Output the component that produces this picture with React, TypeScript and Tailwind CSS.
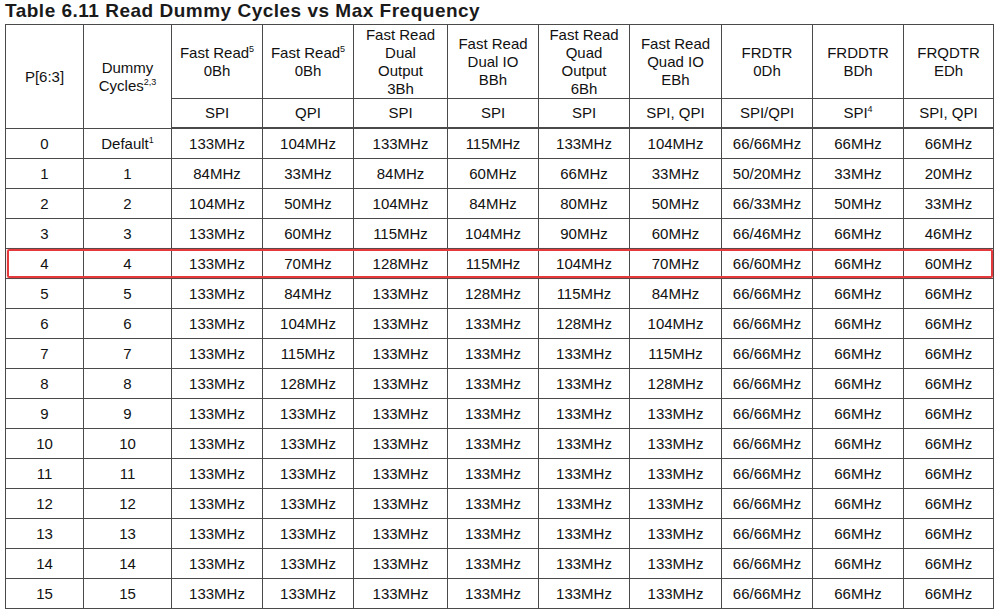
const cols = [78, 88, 91, 91, 94, 91, 91, 92, 91, 91, 90];

type Head = { name: string[]; sup?: string; mode: string; modeSup?: string };

const heads: Head[] = [
  { name: ['Fast Read', '0Bh'], sup: '5', mode: 'SPI' },
  { name: ['Fast Read', '0Bh'], sup: '5', mode: 'QPI' },
  { name: ['Fast Read', 'Dual', 'Output', '3Bh'], mode: 'SPI' },
  { name: ['Fast Read', 'Dual IO', 'BBh'], mode: 'SPI' },
  { name: ['Fast Read', 'Quad', 'Output', '6Bh'], mode: 'SPI' },
  { name: ['Fast Read', 'Quad IO', 'EBh'], mode: 'SPI, QPI' },
  { name: ['FRDTR', '0Dh'], mode: 'SPI/QPI' },
  { name: ['FRDDTR', 'BDh'], mode: 'SPI', modeSup: '4' },
  { name: ['FRQDTR', 'EDh'], mode: 'SPI, QPI' },
];

const rows: string[][] = [
  ['0', 'Default', '133', '104', '133', '115', '133', '104', '66/66', '66', '66'],
  ['1', '1', '84', '33', '84', '60', '66', '33', '50/20', '33', '20'],
  ['2', '2', '104', '50', '104', '84', '80', '50', '66/33', '50', '33'],
  ['3', '3', '133', '60', '115', '104', '90', '60', '66/46', '66', '46'],
  ['4', '4', '133', '70', '128', '115', '104', '70', '66/60', '66', '60'],
  ['5', '5', '133', '84', '133', '128', '115', '84', '66/66', '66', '66'],
  ['6', '6', '133', '104', '133', '133', '128', '104', '66/66', '66', '66'],
  ['7', '7', '133', '115', '133', '133', '133', '115', '66/66', '66', '66'],
  ['8', '8', '133', '128', '133', '133', '133', '128', '66/66', '66', '66'],
  ['9', '9', '133', '133', '133', '133', '133', '133', '66/66', '66', '66'],
  ['10', '10', '133', '133', '133', '133', '133', '133', '66/66', '66', '66'],
  ['11', '11', '133', '133', '133', '133', '133', '133', '66/66', '66', '66'],
  ['12', '12', '133', '133', '133', '133', '133', '133', '66/66', '66', '66'],
  ['13', '13', '133', '133', '133', '133', '133', '133', '66/66', '66', '66'],
  ['14', '14', '133', '133', '133', '133', '133', '133', '66/66', '66', '66'],
  ['15', '15', '133', '133', '133', '133', '133', '133', '66/66', '66', '66'],
];

const cell = 'flex items-center justify-center text-center border-r border-b border-[#4a4a4a]';
const supCls = 'text-[9px] relative -top-[6px] align-baseline';

export default function App() {
  return (
    <div
      className="w-[999px] h-[612px] bg-white text-[#111] overflow-hidden"
      style={{ fontFamily: '"Liberation Sans", Arial, sans-serif' }}
    >
      <div className="h-[24px] pl-[5px] text-[19px] leading-[22px] tracking-[0.5px] font-bold text-[#1a1a1a]">
        Table 6.11 Read Dummy Cycles vs Max Frequency
      </div>

      <div className="relative ml-[5px] w-[989px]">
        <div
          className="grid border-l border-t border-[#4a4a4a] text-[15px] leading-[18px]"
          style={{
            gridTemplateColumns: cols.map((c) => `${c}px`).join(' '),
            gridTemplateRows: `74px 30px repeat(16, 30px)`,
          }}
        >
          {/* Header */}
          <div className={`${cell} row-span-2`}>P[6:3]</div>
          <div className={`${cell} row-span-2 flex-col`}>
            <span>Dummy</span>
            <span>
              Cycles<sup className={supCls}>2,3</sup>
            </span>
          </div>
          {heads.map((h, i) => (
            <div key={'h' + i} className={`${cell} flex-col`}>
              {h.name.map((n, j) => (
                <span key={j}>
                  {n}
                  {j === 0 && h.sup && <sup className={supCls}>{h.sup}</sup>}
                </span>
              ))}
            </div>
          ))}
          {heads.map((h, i) => (
            <div key={'m' + i} className={`${cell} border-b-2`}>
              <span>
                {h.mode}
                {h.modeSup && <sup className={supCls}>{h.modeSup}</sup>}
              </span>
            </div>
          ))}

          {/* Body */}
          {rows.map((r, ri) =>
            r.map((v, ci) => (
              <div key={ri + '-' + ci} className={cell}>
                {ci < 2 ? (
                  v === 'Default' ? (
                    <span>
                      Default<sup className={supCls}>1</sup>
                    </span>
                  ) : (
                    v
                  )
                ) : (
                  `${v}MHz`
                )}
              </div>
            ))
          )}
        </div>

        {/* highlighted row */}
        <div className="absolute left-[2px] top-[225px] w-[986px] h-[29px] border-2 border-[#e5393b] rounded-[2px] shadow-[0_0_2px_rgba(229,57,59,0.5)] pointer-events-none" />
      </div>
    </div>
  );
}
